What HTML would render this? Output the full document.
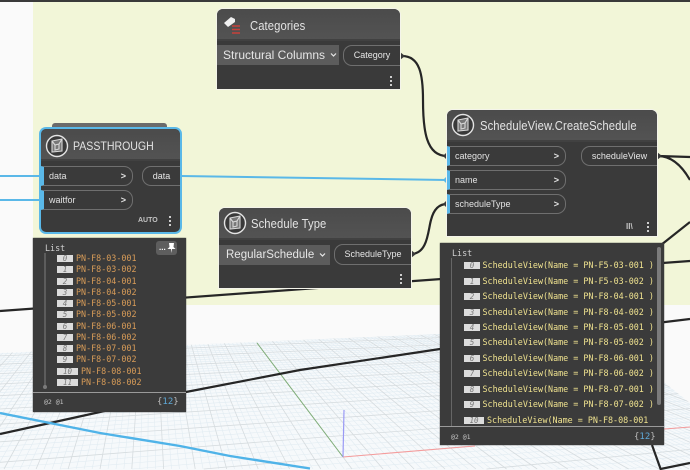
<!DOCTYPE html>
<html>
<head>
<meta charset="utf-8">
<style>
html,body{margin:0;padding:0;background:#fafafa;overflow:hidden;width:690px;height:470px}
#p{position:relative;width:690px;height:470px;overflow:hidden;background:#fafafa;font-family:"Liberation Sans",sans-serif;color:#e2e2e2}
#p>svg{position:absolute;left:0;top:0;display:block}
.n{position:absolute;background:#3a3a3a;box-shadow:0 0 0 1px #f4f4ea;border-radius:6px 6px 0 0;overflow:visible}
.h{position:absolute;left:0;right:0;top:0;background:linear-gradient(#4b4b4b,#535353);border-radius:6px 6px 0 0;border-bottom:2px solid #414141}
.ti{position:absolute;font-size:12.5px;line-height:16px;color:#e3e3e3;white-space:nowrap;letter-spacing:.1px;transform:scaleX(.9);transform-origin:0 50%}
.cb{position:absolute;background:#5c5c5c;font-size:12px;line-height:20px;color:#e6e6e6;padding-left:6px;box-sizing:border-box;white-space:nowrap}
.cb svg{position:absolute;top:7px}
.pl{position:absolute;box-sizing:border-box;border:1px solid #6f6f6f;border-right:0;border-radius:9px 0 0 9px;font-size:9px;line-height:19px;color:#e6e6e6;text-align:center;white-space:nowrap}
.in{position:absolute;box-sizing:border-box;border:1px solid #6f6f6f;border-left:3px solid #5ab8e8;border-radius:0 9px 9px 0;font-size:9px;line-height:19px;color:#e2e2e2;padding-left:5px;white-space:nowrap}
.in b{position:absolute;right:6px;top:0;font-weight:bold;font-size:9px}
.d{position:absolute;width:2px;height:2px;background:#cfcfcf;box-shadow:0 4px 0 #cfcfcf,0 -4px 0 #cfcfcf}
.l{position:absolute;background:#3b3b3b;font-family:"DejaVu Sans Mono","Liberation Mono",monospace;font-size:8.4px;box-shadow:0 0 1px #222}
.r{position:absolute;white-space:pre;line-height:11px;height:11px}
.i{position:absolute;top:2px;height:7px;background:#dcdcdc;color:#777;font-style:italic;font-size:7.500px;line-height:7px;text-align:center}
.o{color:#d89c58}.y{color:#efe28f}
.t{position:absolute;top:0}
.ls{position:absolute;color:#cfcfcf;line-height:10px}
.f{position:absolute;height:1px;background:#9a9a9a;left:0;right:0}
.s{position:absolute;font-size:6.5px;line-height:8px;color:#c4c4c4;white-space:pre}
.c{position:absolute;font-size:9px;line-height:12px;color:#bcbcbc;white-space:pre}
.c span{color:#5fa9d8}
</style>
</head>
<body>
<div id="p">
<svg width="690" height="470" viewBox="0 0 690 470">
  <defs><clipPath id="gc"><polygon points="0,353 440,334 596,328 690,403 690,470 0,470"/></clipPath></defs>
  <rect x="33" y="2" width="657" height="303" fill="#f2f6d8"/>
  <rect x="0" y="0" width="690" height="2" fill="#3a3a3a"/>
  <g clip-path="url(#gc)"><rect x="0" y="320" width="690" height="150" fill="#f6f9fb"/><g id="grid"></g></g>
  <path d="M343 457L257 343" stroke="#7fae78" stroke-width="1" fill="none"/>
  <path d="M343 457L475 446M664 429L690 427" stroke="#f59c9c" stroke-width="1.100" fill="none"/>
  <path d="M343 457L344 410" stroke="#9a9af5" stroke-width="1.200" fill="none"/>
  <g fill="none" stroke="#262626" stroke-width="2.200">
    <path d="M0 311L690 261"/>
    <path d="M0 434L100 412L186 392L300 370L440 349L690 319"/>
    <path d="M402 56C420 56 423 75 423 100C423 130 426 156 447 156"/>
    <path d="M411 254C428 254 428 230 431 220C434 208 440 204 447 204"/>
    <path d="M658 156L690 157"/>
    <path d="M658 156C672 156 682 166 690 180"/>
    <path d="M661 245L690 222"/>
    <path d="M652 445L660.600 469L690 463"/>
  </g>
  <g fill="none" stroke="#5ab8e8" stroke-width="2">
    <path d="M0 176H40"/><path d="M0 200H40"/>
    <path d="M181 176L447 180"/>
  </g>
  <path d="M0 413L100 433L180 446L230 456L310 468.500" fill="none" stroke="#4fb3e8" stroke-width="2.400"/>
  <g fill="#3a3a3a"><path d="M400 52l5 4l-5 4z"/><path d="M411 250l5 4l-5 4z"/><path d="M447 152l-4 4l4 4z"/><path d="M447 200l-4 4l4 4z"/><path d="M657 152l5 4l-5 4z"/></g>
  <path d="M447 176l-4 4l4 4z" fill="#5ab8e8"/>
</svg>

<!-- Categories -->
<div class="n" style="left:217px;top:9px;width:183px;height:80px">
  <div class="h" style="height:30px"></div>
  <svg style="position:absolute;left:6px;top:6px" width="22" height="22" viewBox="0 0 22 22"><path d="M1 8L8 2L12 4L12 7L5 12Z" fill="#f0f0f0"/><path d="M9 11H17M9 14.500H17M9 18H17" stroke="#c8413a" stroke-width="1.600" fill="none"/></svg>
  <div class="ti" style="left:33px;top:9px">Categories</div>
  <div class="cb" style="left:0;top:36px;width:122px;height:20px">Structural Columns<svg style="left:113px" width="7" height="6" viewBox="0 0 7 6"><path d="M1 1.500L3.500 4L6 1.500" fill="none" stroke="#e6e6e6" stroke-width="1.200"/></svg></div>
  <div class="pl" style="left:126px;top:36px;width:57px;height:21px">Category</div>
  <div class="d" style="left:173px;top:71px"></div>
</div>

<!-- Schedule Type -->
<div class="n" style="left:219px;top:208px;width:192px;height:80px">
  <div class="h" style="height:30px"></div>
  <svg style="position:absolute;left:4px;top:3px" width="24" height="24" viewBox="0 0 24 24"><circle cx="12" cy="12" r="10.500" fill="#3a3a3a" stroke="#e4e4e4" stroke-width="1.400"/><path d="M7 7L17 5V17L7 18Z" fill="#777"/><path d="M7 7L17 5V17L7 18ZM7 7L10 11L14 10L17 5M10 11V16L14 15V10" fill="none" stroke="#d8d8d8" stroke-width="1.100"/></svg>
  <div class="ti" style="left:32px;top:8px">Schedule Type</div>
  <div class="cb" style="left:0;top:37px;width:111px;height:20px;padding-left:7px;font-size:11.500px">RegularSchedule<svg style="left:100px" width="7" height="6" viewBox="0 0 7 6"><path d="M1 1.500L3.500 4L6 1.500" fill="none" stroke="#e6e6e6" stroke-width="1.200"/></svg></div>
  <div class="pl" style="left:115px;top:36px;width:77px;height:21px">ScheduleType</div>
  <div class="d" style="left:181px;top:70px"></div>
</div>

<!-- CreateSchedule -->
<div class="n" style="left:447px;top:110px;width:210px;height:126px">
  <div class="h" style="height:30px"></div>
  <svg style="position:absolute;left:4px;top:3px" width="24" height="24" viewBox="0 0 24 24"><circle cx="12" cy="12" r="10.500" fill="#3a3a3a" stroke="#e4e4e4" stroke-width="1.400"/><path d="M7 7L17 5V17L7 18Z" fill="#777"/><path d="M7 7L17 5V17L7 18ZM7 7L10 11L14 10L17 5M10 11V16L14 15V10" fill="none" stroke="#d8d8d8" stroke-width="1.100"/></svg>
  <div class="ti" style="left:33px;top:8px">ScheduleView.CreateSchedule</div>
  <div class="in" style="left:0;top:36px;width:119px;height:20px">category<b>&gt;</b></div>
  <div class="in" style="left:0;top:60px;width:119px;height:20px">name<b>&gt;</b></div>
  <div class="in" style="left:0;top:84px;width:119px;height:20px">scheduleType<b>&gt;</b></div>
  <div class="pl" style="left:134px;top:36px;width:76px;height:20px">scheduleView</div>
  <div class="s" style="left:179px;top:113px;font-size:8px;font-weight:bold">II\</div>
  <div class="d" style="left:200px;top:116px"></div>
</div>

<!-- Passthrough -->
<div style="position:absolute;left:52px;top:123px;width:115px;height:6px;background:#6b6b6b;border-radius:3px 3px 0 0"></div>
<div class="n" style="left:41px;top:129px;width:139px;height:103px;box-shadow:0 0 0 2px #5ab8e8;border-radius:5px">
  <div class="h" style="height:30px"></div>
  <svg style="position:absolute;left:4px;top:5px" width="24" height="24" viewBox="0 0 24 24"><circle cx="12" cy="12" r="10.500" fill="#3a3a3a" stroke="#e4e4e4" stroke-width="1.400"/><path d="M7 7L17 5V17L7 18Z" fill="#777"/><path d="M7 7L17 5V17L7 18ZM7 7L10 11L14 10L17 5M10 11V16L14 15V10" fill="none" stroke="#d8d8d8" stroke-width="1.100"/></svg>
  <div class="ti" style="left:32px;top:9px;font-size:12px;transform:scaleX(.88);letter-spacing:0">PASSTHROUGH</div>
  <div class="in" style="left:0;top:37px;width:92px;height:20px">data<b>&gt;</b></div>
  <div class="in" style="left:0;top:61px;width:92px;height:20px">waitfor<b>&gt;</b></div>
  <div class="pl" style="left:101px;top:37px;width:38px;height:20px">data</div>
  <div class="s" style="left:97px;top:88px;font-weight:bold;font-size:7px">AUTO</div>
  <div class="d" style="left:128px;top:91px"></div>
</div>

<!-- Left list -->
<div class="l" style="left:33px;top:238px;width:153px;height:174px">
  <div class="ls" style="left:12px;top:5px">List</div>
  <div style="position:absolute;left:11px;top:15px;width:2px;height:134px;background:#5c5c5c"></div>
  <div style="position:absolute;left:10px;top:147px;width:4px;height:4px;border-radius:2px;background:#7a7a7a"></div>
  <div style="position:absolute;left:123px;top:3px;width:21px;height:14px;background:#5e5e5e;border-radius:3px;color:#fff;font:bold 8px/13px 'Liberation Sans',sans-serif;white-space:pre;text-indent:3px">...<svg style="position:absolute;left:11px;top:2px" width="9" height="10" viewBox="0 0 9 10"><path d="M2 0H7L6.500 4L8.500 6H5L4.500 10L4 6H.5L2.500 4Z" fill="#fff"/></svg></div>
  <div class="r o" style="left:0;top:15px;width:153px"><span class="i" style="left:24px;width:16px">0</span><span class="t" style="left:43px">PN-F8-03-001</span></div>
  <div class="r o" style="left:0;top:26.300px;width:153px"><span class="i" style="left:24px;width:16px">1</span><span class="t" style="left:43px">PN-F8-03-002</span></div>
  <div class="r o" style="left:0;top:37.500px;width:153px"><span class="i" style="left:24px;width:16px">2</span><span class="t" style="left:43px">PN-F8-04-001</span></div>
  <div class="r o" style="left:0;top:48.800px;width:153px"><span class="i" style="left:24px;width:16px">3</span><span class="t" style="left:43px">PN-F8-04-002</span></div>
  <div class="r o" style="left:0;top:60px;width:153px"><span class="i" style="left:24px;width:16px">4</span><span class="t" style="left:43px">PN-F8-05-001</span></div>
  <div class="r o" style="left:0;top:71.300px;width:153px"><span class="i" style="left:24px;width:16px">5</span><span class="t" style="left:43px">PN-F8-05-002</span></div>
  <div class="r o" style="left:0;top:82.500px;width:153px"><span class="i" style="left:24px;width:16px">6</span><span class="t" style="left:43px">PN-F8-06-001</span></div>
  <div class="r o" style="left:0;top:93.800px;width:153px"><span class="i" style="left:24px;width:16px">7</span><span class="t" style="left:43px">PN-F8-06-002</span></div>
  <div class="r o" style="left:0;top:105px;width:153px"><span class="i" style="left:24px;width:16px">8</span><span class="t" style="left:43px">PN-F8-07-001</span></div>
  <div class="r o" style="left:0;top:116.300px;width:153px"><span class="i" style="left:24px;width:16px">9</span><span class="t" style="left:43px">PN-F8-07-002</span></div>
  <div class="r o" style="left:0;top:127.500px;width:153px"><span class="i" style="left:24px;width:21px">10</span><span class="t" style="left:48px">PN-F8-08-001</span></div>
  <div class="r o" style="left:0;top:138.800px;width:153px"><span class="i" style="left:24px;width:21px">11</span><span class="t" style="left:48px">PN-F8-08-002</span></div>
  <div class="f" style="top:154px"></div>
  <div class="s" style="left:11px;top:160px">@2 @1</div>
  <div class="c" style="left:124px;top:158px">{<span>12</span>}</div>
</div>

<!-- Right list -->
<div class="l" style="left:440px;top:243px;width:224px;height:202px">
  <div class="ls" style="left:12px;top:5px">List</div>
  <div style="position:absolute;left:11px;top:15px;width:1px;height:168px;background:#666"></div>
  <div style="position:absolute;left:217px;top:4px;width:4px;height:158px;background:#7b7b7b;border-radius:2px"></div>
  <div class="r y" style="left:0;top:17.200px;width:217px"><span class="i" style="left:24px;width:16px">0</span><span class="t" style="left:42.500px">ScheduleView(Name = PN-F5-03-001 )</span></div>
  <div class="r y" style="left:0;top:32.600px;width:217px"><span class="i" style="left:24px;width:16px">1</span><span class="t" style="left:42.500px">ScheduleView(Name = PN-F5-03-002 )</span></div>
  <div class="r y" style="left:0;top:48px;width:217px"><span class="i" style="left:24px;width:16px">2</span><span class="t" style="left:42.500px">ScheduleView(Name = PN-F8-04-001 )</span></div>
  <div class="r y" style="left:0;top:63.500px;width:217px"><span class="i" style="left:24px;width:16px">3</span><span class="t" style="left:42.500px">ScheduleView(Name = PN-F8-04-002 )</span></div>
  <div class="r y" style="left:0;top:78.900px;width:217px"><span class="i" style="left:24px;width:16px">4</span><span class="t" style="left:42.500px">ScheduleView(Name = PN-F8-05-001 )</span></div>
  <div class="r y" style="left:0;top:94.300px;width:217px"><span class="i" style="left:24px;width:16px">5</span><span class="t" style="left:42.500px">ScheduleView(Name = PN-F8-05-002 )</span></div>
  <div class="r y" style="left:0;top:109.800px;width:217px"><span class="i" style="left:24px;width:16px">6</span><span class="t" style="left:42.500px">ScheduleView(Name = PN-F8-06-001 )</span></div>
  <div class="r y" style="left:0;top:125.200px;width:217px"><span class="i" style="left:24px;width:16px">7</span><span class="t" style="left:42.500px">ScheduleView(Name = PN-F8-06-002 )</span></div>
  <div class="r y" style="left:0;top:140.600px;width:217px"><span class="i" style="left:24px;width:16px">8</span><span class="t" style="left:42.500px">ScheduleView(Name = PN-F8-07-001 )</span></div>
  <div class="r y" style="left:0;top:156.100px;width:217px"><span class="i" style="left:24px;width:16px">9</span><span class="t" style="left:42.500px">ScheduleView(Name = PN-F8-07-002 )</span></div>
  <div class="r y" style="left:0;top:171.500px;width:217px"><span class="i" style="left:24px;width:20px">10</span><span class="t" style="left:47px">ScheduleView(Name = PN-F8-08-001</span></div>
  <div class="f" style="top:183px"></div>
  <div class="s" style="left:11px;top:190px">@2 @1</div>
  <div class="c" style="left:194px;top:188px">{<span>12</span>}</div>
</div>
</div>
<script>
(function(){
var g=document.getElementById('grid'),a=0.0027,b=0.0214,h='';
function P(u,v){var w=u*a,t=v*b,d=1+w+t;return [(343+2930*w+150*t)/d,(457+234*w+200*t)/d];}
function L(p,q,m){
  var dx=q[0]-p[0],dy=q[1]-p[1],t0=0,t1=1,e=[[-dx,p[0]],[dx,690-p[0]],[-dy,p[1]-320],[dy,469-p[1]]],i,r;
  for(i=0;i<4;i++){
    if(e[i][0]===0){if(e[i][1]<0)return;continue;}
    r=e[i][1]/e[i][0];
    if(e[i][0]<0){if(r>t0)t0=r;}else{if(r<t1)t1=r;}
  }
  if(t0>=t1)return;
  h+='<line x1="'+(p[0]+dx*t0).toFixed(1)+'" y1="'+(p[1]+dy*t0).toFixed(1)+'" x2="'+(p[0]+dx*t1).toFixed(1)+'" y2="'+(p[1]+dy*t1).toFixed(1)+'" stroke="'+(m?'#d6dcdf':'#e2ecf2')+'" stroke-width="'+(m?0.8:0.6)+'"/>';
}
var u,v;
for(u=-136;u<=200;u++){if(u%4)L(P(u,-20),P(u,39),0);}
for(v=-20;v<=39;v++){if(v%4)L(P(-136,v),P(200,v),0);}
for(u=-136;u<=200;u+=4)L(P(u,-20),P(u,39),1);
for(v=-20;v<=39;v+=4)L(P(-136,v),P(200,v),1);
g.innerHTML=h;
})();
</script>
</body>
</html>
